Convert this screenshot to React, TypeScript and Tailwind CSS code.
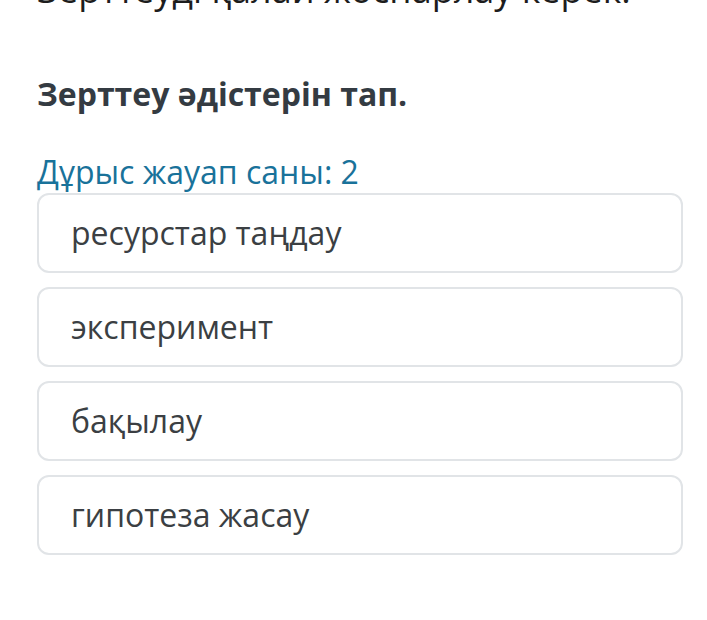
const options = ['ресурстар таңдау', 'эксперимент', 'бақылау', 'гипотеза жасау'];

export default function App() {
  return (
    <div
      className="w-[707px] h-[620px] overflow-hidden bg-white"
      style={{ fontFamily: '"Open Sans", "Noto Sans", sans-serif' }}
    >
      <div className="pl-[37px] pr-[24px]">
        <h2 className="mt-[-30px] text-[36px] leading-[40px] text-[#1d1d1d] whitespace-nowrap">
          Зерттеуді қалай жоспарлау керек.
        </h2>
        <h3 className="mt-[64px] text-[32px] leading-[40px] font-bold text-[#343b42]">
          Зерттеу әдістерін тап.
        </h3>
        <p className="mt-[38px] text-[32px] leading-[40px] text-[#19729a]">Дұрыс жауап саны: 2</p>
        <div className="mt-[1px] flex flex-col gap-[14px]">
          {options.map(o => (
            <div
              key={o}
              className="h-[80px] flex items-center pl-[32px] rounded-[12px] border-2 border-[#e1e4e7] bg-white text-[32px] text-[#3b3f43]"
            >
              {o}
            </div>
          ))}
        </div>
      </div>
    </div>
  );
}
